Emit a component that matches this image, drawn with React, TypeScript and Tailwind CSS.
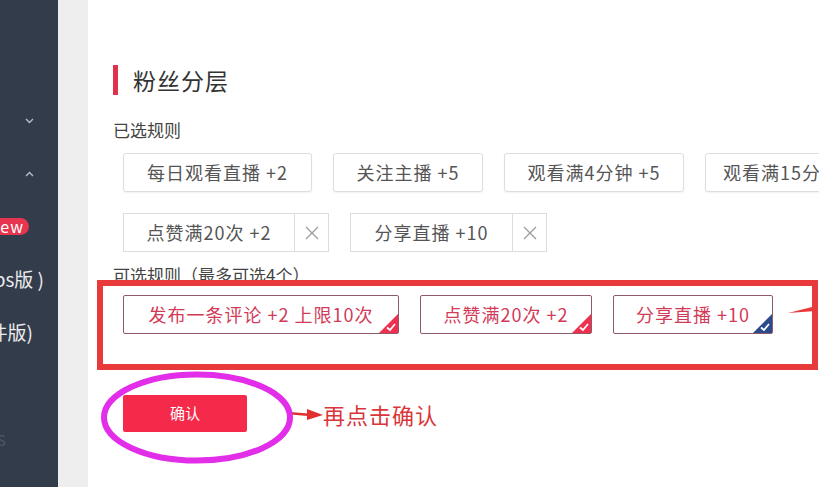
const selected = [
  { label: "每日观看直播 +2", w: "w-[189px]" },
  { label: "关注主播 +5", w: "w-[150px]" },
  { label: "观看满4分钟 +5", w: "w-[180px]" },
  { label: "观看满15分钟 +5", w: "w-[180px]" },
];

const removable = [
  { label: "点赞满20次 +2", w: "w-[170px]" },
  { label: "分享直播 +10", w: "w-[161px]" },
];

const optional = [
  { label: "发布一条评论 +2 上限10次", w: "w-[276px]", corner: "#f0304f" },
  { label: "点赞满20次 +2", w: "w-[172px]", corner: "#f0304f" },
  { label: "分享直播 +10", w: "w-[160px]", corner: "#2b4a8c" },
];

function Corner({ color }: { color: string }) {
  return (
    <svg className="absolute bottom-0 right-0" width="19" height="19" viewBox="0 0 19 19">
      <polygon points="19,0 19,19 0,19" fill={color} />
      <path d="M8 13.5 L11 16 L16 10" fill="none" stroke="#fff" strokeWidth="1.8" />
    </svg>
  );
}

function Sidebar() {
  return (
    <div className="flex w-[58px] shrink-0 flex-col overflow-hidden bg-[#333c4b] pt-[94px] text-[19px] text-[#ececec]">
      <div className="flex h-[53px] items-center justify-end pr-[24px]">
        <svg width="9" height="6" viewBox="0 0 9 6">
          <path d="M1 1 L4.5 4.5 L8 1" fill="none" stroke="#b8bdc8" strokeWidth="1.4" />
        </svg>
      </div>
      <div className="flex h-[53px] items-center justify-end pr-[24px]">
        <svg width="9" height="6" viewBox="0 0 9 6">
          <path d="M1 5 L4.5 1.5 L8 5" fill="none" stroke="#b8bdc8" strokeWidth="1.4" />
        </svg>
      </div>
      <div className="flex h-[53px] items-center justify-end pr-[29px]">
        <span className="shrink-0 whitespace-nowrap rounded-full bg-[#e8354f] pl-[10px] pr-[5px] text-[16px] leading-[17px] tracking-[1px] text-white">
          new
        </span>
      </div>
      <div className="flex h-[53px] items-center justify-end pr-[14px]">
        <span className="shrink-0 whitespace-nowrap">（ps版 )</span>
      </div>
      <div className="flex h-[53px] items-center justify-end pr-[25px]">
        <span className="shrink-0 whitespace-nowrap">件版)</span>
      </div>
      <div className="h-[53px]" />
      <div className="flex h-[53px] items-center justify-end pr-[52px]">
        <span className="shrink-0 whitespace-nowrap text-[#4c5464]">cs</span>
      </div>
    </div>
  );
}

export default function App() {
  return (
    <div className="relative flex h-[487px] w-[819px] overflow-hidden bg-white font-['Noto_Sans_CJK_SC','Liberation_Sans',sans-serif]">
      <Sidebar />
      <div className="w-[30px] shrink-0 bg-[#eeeeee]" />

      <div className="flex min-w-0 flex-1 flex-col pl-[25px] pt-[65px]">
        <div className="flex h-[30px] items-center">
          <div className="h-[30px] w-[5px] bg-[#e2304f]" />
          <h1 className="ml-[15px] text-[23px] leading-[30px] tracking-[1px] text-[#333]">粉丝分层</h1>
        </div>

        <p className="mt-[27px] text-[17px] leading-[16px] text-[#444]">已选规则</p>

        <div className="ml-[10px] mt-[15px] flex gap-[21px]">
          {selected.map((t) => (
            <div
              key={t.label}
              className={`flex h-[39px] ${t.w} shrink-0 items-center justify-center whitespace-nowrap rounded-[3px] border border-[#dedede] bg-white text-[18px] tracking-[1px] text-[#555] shadow-[0_1px_2px_rgba(0,0,0,0.06)]`}
            >
              {t.label}
            </div>
          ))}
        </div>

        <div className="ml-[10px] mt-[21px] flex gap-[21px]">
          {removable.map((t) => (
            <div key={t.label} className="flex h-[39px] shrink-0 border border-[#dcdcdc] bg-white text-[18px] tracking-[1px] text-[#555]">
              <div className={`flex ${t.w} items-center justify-center whitespace-nowrap`}>{t.label}</div>
              <div className="flex w-[34px] items-center justify-center border-l border-[#dcdcdc]">
                <svg width="14" height="14" viewBox="0 0 14 14">
                  <path d="M1 1 L13 13 M13 1 L1 13" stroke="#9a9a9a" strokeWidth="1.2" />
                </svg>
              </div>
            </div>
          ))}
        </div>

        <p className="mt-[15px] text-[17px] leading-[16px] text-[#444]">可选规则（最多可选4个）</p>

        <div className="ml-[10px] mt-[12px] flex gap-[21px]">
          {optional.map((t) => (
            <div
              key={t.label}
              className={`relative flex h-[39px] ${t.w} shrink-0 items-center justify-center whitespace-nowrap rounded-[2px] border border-[#8e5a66] bg-white text-[18px] tracking-[1px] text-[#d23b58]`}
            >
              {t.label}
              <Corner color={t.corner} />
            </div>
          ))}
        </div>

        <div className="mt-[61px] flex items-center">
          <button className="ml-[10px] h-[37px] w-[124px] rounded-[2px] bg-[#f52a4b] text-[15px] text-white">
            确认
          </button>
          <svg className="ml-[40px] shrink-0" width="36" height="14" viewBox="0 0 36 14">
            <path d="M0 6 L24 8" stroke="#e2302f" strokeWidth="2.5" />
            <polygon points="20,2 36,8 20,13" fill="#e2302f" />
          </svg>
          <span className="text-[22px] leading-[26px] tracking-[1px] text-[#d9363a]">再点击确认</span>
        </div>
      </div>

      {/* annotation overlays */}
      <div className="pointer-events-none absolute left-[97px] top-[280px] h-[90px] w-[721px] border-[6px] border-[#e83a3a]" />
      <svg className="pointer-events-none absolute left-[780px] top-[298px]" width="36" height="20" viewBox="0 0 36 20">
        <polygon points="8,15 36,8 36,13" fill="#e83a3a" />
      </svg>
      <svg className="pointer-events-none absolute left-[100px] top-[371px]" width="194" height="93" viewBox="0 0 194 93">
        <ellipse cx="97" cy="46.5" rx="93" ry="43" fill="none" stroke="#e22ee8" strokeWidth="6" />
      </svg>
    </div>
  );
}
